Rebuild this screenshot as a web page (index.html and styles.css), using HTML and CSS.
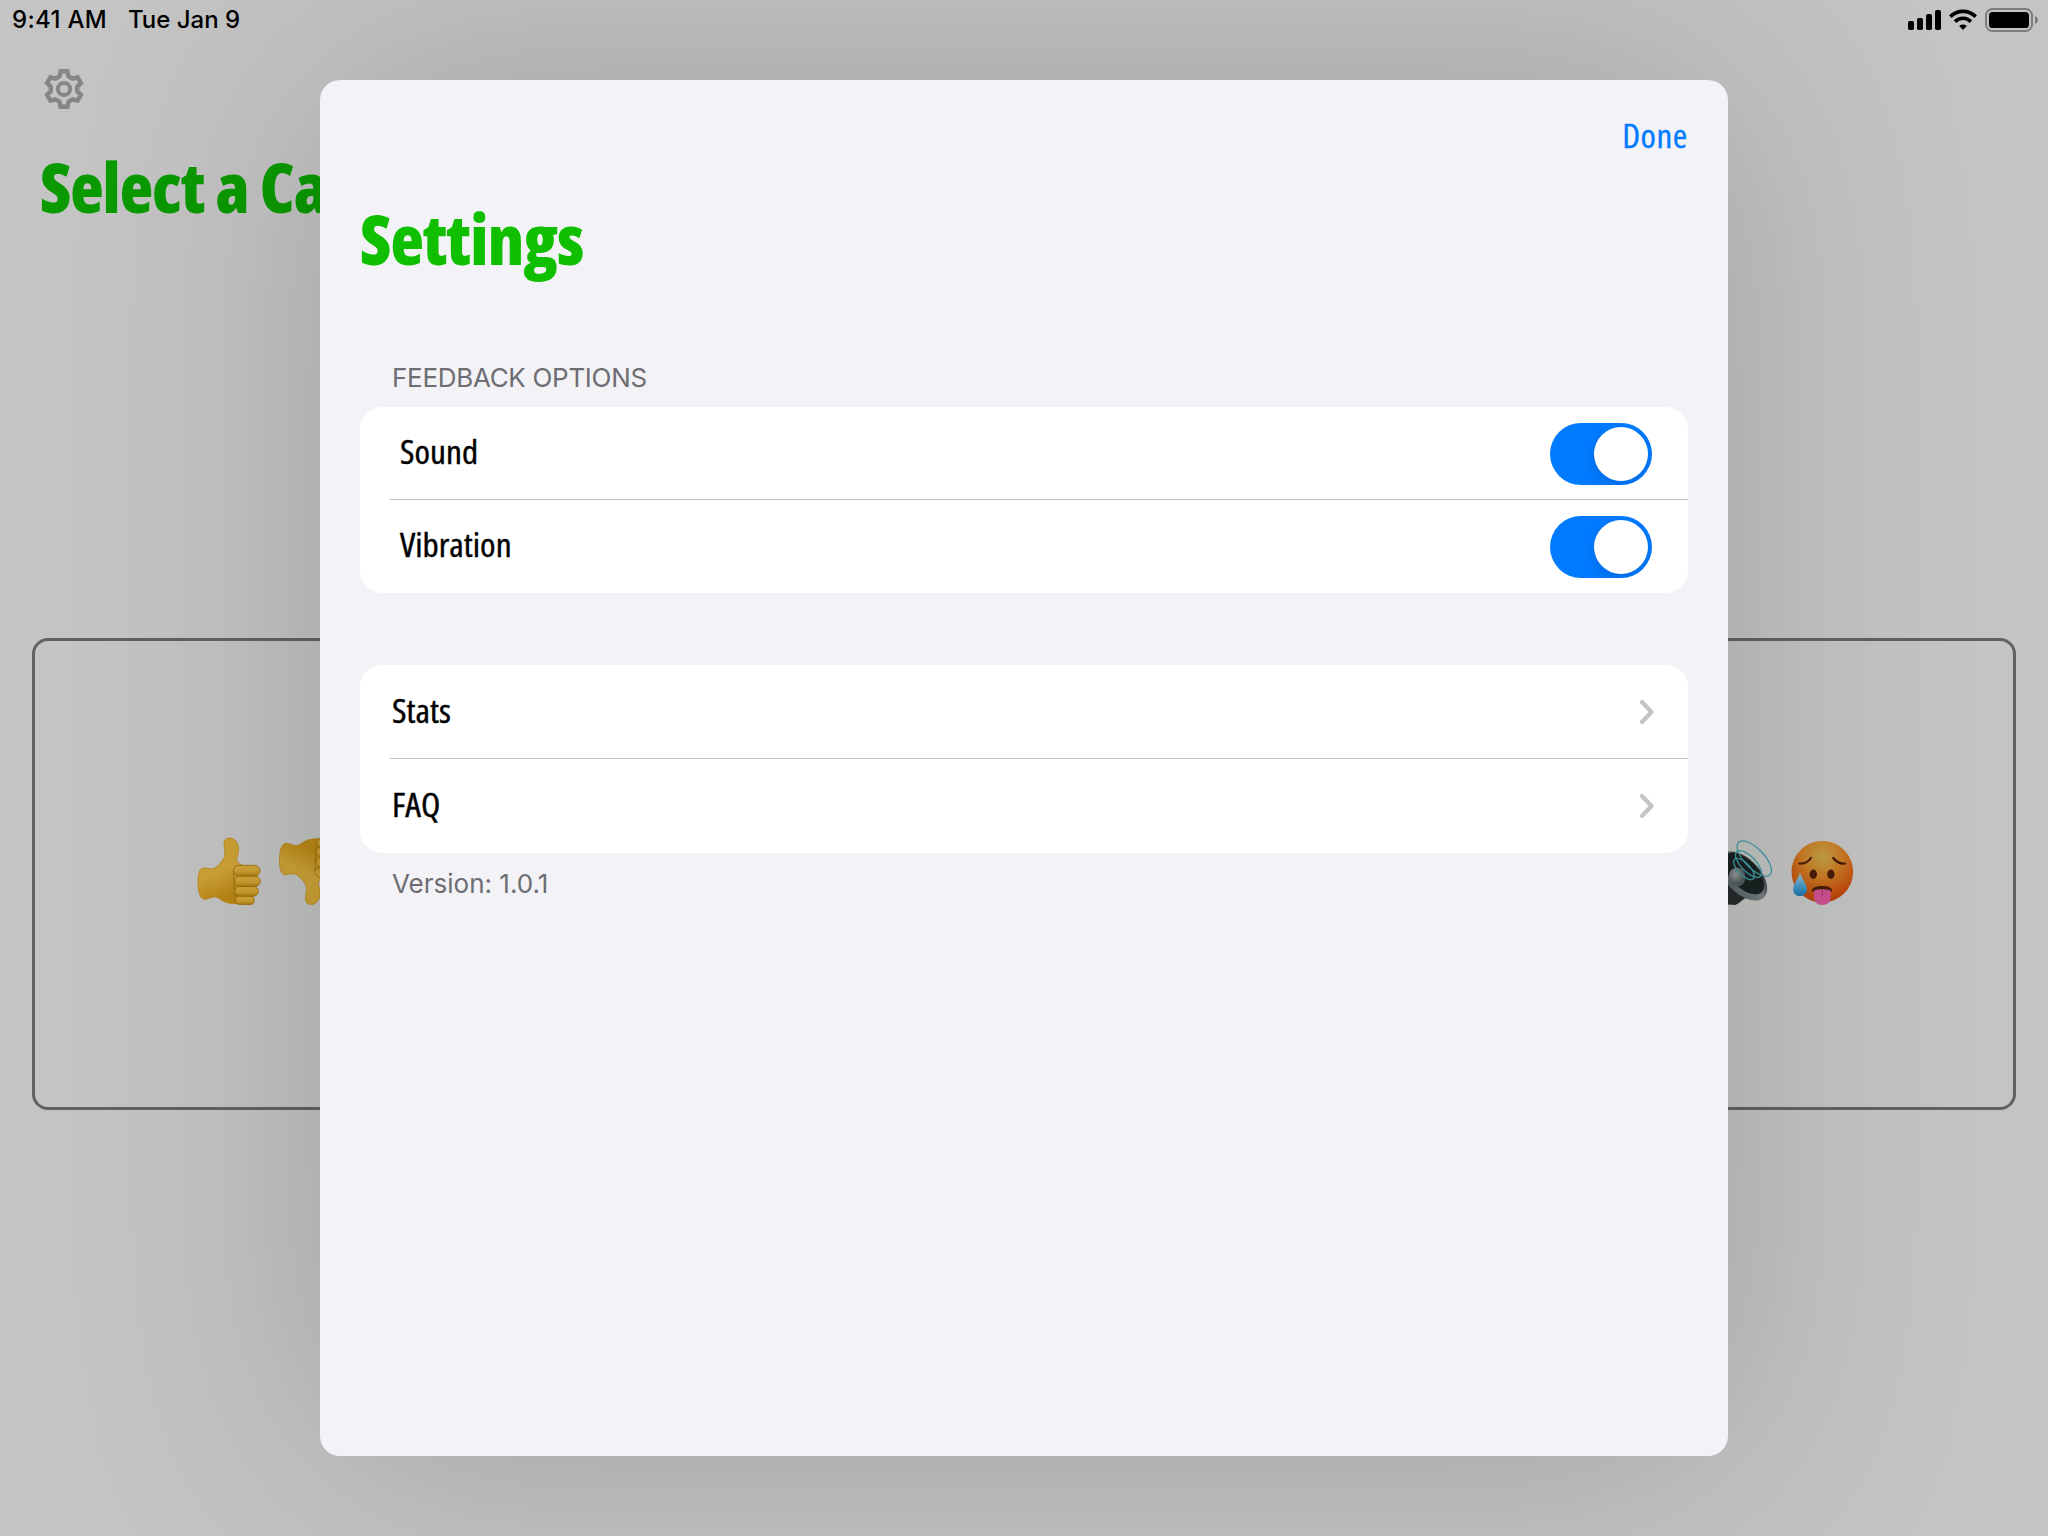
FILE: index.html
```html
<!DOCTYPE html>
<html lang="en">
<head>
<meta charset="utf-8">
<title>Settings</title>
<link rel="stylesheet" href="styles.css">
</head>
<body>
<div class="screen">
  <header class="status">
    <span class="time">9:41 AM</span>
    <span>Tue Jan 9</span>
    <svg class="status-icons" width="132" height="40" viewBox="0 0 132 40">
      <rect x="0" y="21" width="6" height="9" rx="1.8"/>
      <rect x="9" y="18" width="6" height="12" rx="1.8"/>
      <rect x="18" y="14" width="6" height="16" rx="1.8"/>
      <rect x="27" y="10" width="6" height="20" rx="1.8"/>
      <g fill="none" stroke="#000" stroke-width="3.6">
        <path d="M42.3 16.6a18 18 0 0 1 25.4 0"/>
        <path d="M47 21.6a11.4 11.4 0 0 1 16 0"/>
      </g>
      <path d="M51.2 26a5.6 5.6 0 0 1 7.6 0L55 30z"/>
      <rect x="78" y="9" width="46" height="22" rx="6.5" fill="none" stroke="#7b7c7b" stroke-width="2"/>
      <rect x="81" y="12" width="40" height="16" rx="3.6"/>
      <path d="M127 16c4 1.5 4 6.500 0 8z" fill="#7b7c7b"/>
    </svg>
  </header>
  <nav class="nav">
    <svg width="42" height="42" viewBox="-21 -21 42 42" fill="none" stroke="#868686">
      <path stroke-width="4.400" stroke-linejoin="miter" d="M-4.600-12.600L-3.400-17.800H3.400L4.600-12.600L8.600-10.300L13.500-11.700L16.900-5.900L13.200-2.300V2.300L16.900 5.900L13.500 11.700L8.600 10.300L4.600 12.600L3.400 17.800H-3.400L-4.600 12.600L-8.600 10.300L-13.500 11.700L-16.900 5.900L-13.200 2.300V-2.300L-16.900-5.900L-13.500-11.700L-8.600-10.300Z"/>
      <circle r="6.100" stroke-width="4"/>
    </svg>
  </nav>
  <h1 class="title back-title">Select a Category</h1>
  <main class="cards">
    <div class="card">
      <svg width="66" height="70" viewBox="0 0 66 70">
        <defs>
          <linearGradient id="skin" x1="0" y1="0" x2="0.300" y2="1">
            <stop offset="0" stop-color="#cda232"/><stop offset="0.600" stop-color="#cfa338"/><stop offset="1" stop-color="#bb8614"/>
          </linearGradient>
          <linearGradient id="finger" x1="0" y1="0" x2="0" y2="1">
            <stop offset="0" stop-color="#d3a93c"/><stop offset="0.600" stop-color="#cd9e30"/><stop offset="1" stop-color="#b17b0e"/>
          </linearGradient>
          <g id="thumb">
            <path fill="url(#skin)" stroke="#b98716" stroke-width="0.800" d="M28 7C28.500 3 31 2 34 2C39 2.500 42.500 7 42.600 13C42.800 18 40 22 41 25C42 28 45 28 47 30L46 66C42 68.500 35 68 29 66C25 64.500 22 61 18.500 60.800C15 61 12 63.500 8.500 63.300C3 63 2 53 2 46C2 40 3 33 6.500 32C10 31.500 14 33.500 18 32.500C22 30 26 26 28.500 21C30 17 27.800 12 28 7Z"/>
            <path fill="none" stroke="#96690a" stroke-width="1.200" opacity="0.600" d="M37.500 35C37 45 39 55 39.500 65"/>
            <g fill="url(#finger)" stroke="#9a6b0c" stroke-width="0.800">
              <rect x="39.300" y="60" width="19" height="8.600" rx="4.300"/>
              <rect x="38.700" y="50.300" width="23.600" height="10" rx="5"/>
              <rect x="38.700" y="40" width="25.600" height="10.400" rx="5.200"/>
              <rect x="37.500" y="29.300" width="26.500" height="10.800" rx="5.400"/>
            </g>
          </g>
        </defs>
        <use href="#thumb"/>
      </svg>
      <svg width="66" height="70" viewBox="0 0 66 70"><use href="#thumb" transform="translate(0.500 70.500) scale(1 -1)"/></svg>
    </div>
    <div class="card card-end">
      <svg width="66" height="70" viewBox="0 0 66 70">
        <defs>
          <linearGradient id="rim" x1="0" y1="0" x2="0" y2="1">
            <stop offset="0" stop-color="#2c3032"/><stop offset="0.500" stop-color="#7b8287"/><stop offset="1" stop-color="#5c6368"/>
          </linearGradient>
          <radialGradient id="ball" cx="0.400" cy="0.350"><stop offset="0" stop-color="#969b9d"/><stop offset="1" stop-color="#555b5e"/></radialGradient>
        </defs>
        <path fill="#262a2c" d="M4 30L24 20L40 62C34 61 32 67 26 69L12 68Z"/>
        <ellipse cx="34" cy="40" rx="30" ry="17" transform="rotate(46 34 40)" fill="url(#rim)"/>
        <ellipse cx="34.500" cy="37.500" rx="26" ry="13.500" transform="rotate(46 34.500 37.500)" fill="#1b2022"/>
        <ellipse cx="28" cy="41" rx="8.500" ry="9.500" fill="url(#ball)"/>
        <g fill="none" stroke="#3f9aa5" stroke-width="1.300">
          <ellipse cx="45.300" cy="22.500" rx="22.500" ry="9.800" transform="rotate(46 45.300 22.500)"/>
          <ellipse cx="39.500" cy="28" rx="17" ry="7.500" transform="rotate(46 39.500 28)"/>
          <ellipse cx="35" cy="33" rx="13.500" ry="6" transform="rotate(46 35 33)"/>
        </g>
      </svg>
      <svg width="66" height="70" viewBox="0 0 66 70">
        <defs>
          <radialGradient id="face" cx="0.500" cy="0.250" r="0.800">
            <stop offset="0" stop-color="#c4a048"/><stop offset="0.400" stop-color="#ca7c26"/><stop offset="0.800" stop-color="#c04c0e"/><stop offset="1" stop-color="#ad3a08"/>
          </radialGradient>
          <linearGradient id="drop" x1="0" y1="0" x2="0" y2="1"><stop offset="0" stop-color="#a9bfc9"/><stop offset="0.550" stop-color="#4a9ccb"/><stop offset="1" stop-color="#1676ab"/></linearGradient>
        </defs>
        <circle cx="33.300" cy="35.700" r="30.800" fill="url(#face)"/>
        <g fill="#4a1d0a">
          <ellipse cx="24.300" cy="38.300" rx="3.700" ry="4.700"/>
          <ellipse cx="41.900" cy="38.300" rx="3.700" ry="4.700"/>
          <path d="M22.800 56C22.500 52 26 50 33 50S43.500 52 43.200 56Q33 52.500 22.800 56Z"/>
        </g>
        <g fill="none" stroke="#4a1d0a" stroke-width="2.200" stroke-linecap="round">
          <path d="M10.300 27.500Q18 28 22 22"/>
          <path d="M44.300 22Q48.500 28 56 27.500"/>
        </g>
        <path fill="#cc5091" d="M25 54.500Q33 52 41.700 54.500V61C41.700 66 38 69 33.300 69S25 66 25 61Z"/>
        <path fill="none" stroke="#9c2f68" stroke-width="0.900" d="M33.300 54V60"/>
        <path fill="url(#drop)" d="M11 36.500C12.500 42 18 48 18 53.500C18 57.500 15 60 11 60S4.200 57.500 4.200 53.500C4.200 48 9.500 42 11 36.500Z"/>
      </svg>
    </div>
  </main>
</div>

<section class="sheet">
  <div class="toolbar"><a class="done">Done</a></div>
  <h1 class="title">Settings</h1>
  <h2 class="caption heading">FEEDBACK OPTIONS</h2>
  <div class="group">
    <div class="row inset"><span>Sound</span><i class="toggle"></i></div>
    <div class="row inset"><span>Vibration</span><i class="toggle"></i></div>
  </div>
  <div class="group links">
    <div class="row"><span>Stats</span>
      <svg class="chevron" width="16" height="26" viewBox="0 0 16 26"><path d="M3 3L12.500 13L3 23"/></svg></div>
    <div class="row"><span>FAQ</span>
      <svg class="chevron" width="16" height="26" viewBox="0 0 16 26"><path d="M3 3L12.500 13L3 23"/></svg></div>
  </div>
  <p class="caption version">Version: 1.0.1</p>
</section>
</body>
</html>
```
FILE: styles.css
```css
* { box-sizing: border-box; }

body {
  margin: 0;
  position: relative;
  width: 2048px;
  height: 1536px;
  overflow: hidden;
  background: #c4c4c4;
  font-family: "Open Sans", sans-serif;
  font-stretch: 75%;
}

svg { display: block; flex: none; }

/* Dimmed screen behind the sheet */
.status {
  display: flex;
  gap: 21px;
  height: 40px;
  padding: 0 8px 0 12px;
  font: 500 24px/40px Inter, sans-serif;
  color: #000;
}
.time { letter-spacing: 0.3px; }
.status-icons { margin-left: auto; }

.nav { padding: 28px 0 0 43px; height: 106px; }

.title {
  margin: 0;
  font-size: 69px;
  line-height: 80px;
  font-weight: 800;
  letter-spacing: -0.8px;
  color: #10c000;
  white-space: nowrap;
}
.back-title {
  width: 320px;
  overflow: hidden;
  padding-left: 40px;
  letter-spacing: -1px;
  color: #0a9a00;
}

.cards {
  display: flex;
  gap: 32px;
  margin-top: 412px;
  padding: 0 32px;
}
.card {
  flex: 1;
  height: 472px;
  border: 3px solid #626262;
  border-radius: 16px;
  padding: 195px 161px 0;
  display: flex;
  gap: 15px;
}
.card-end { justify-content: flex-end; gap: 14px; padding-right: 158px; }

/* Modal sheet */
.sheet {
  position: absolute;
  left: 320px;
  top: 80px;
  width: 1408px;
  height: 1376px;
  padding: 0 40px;
  border-radius: 20px;
  background: #f2f2f7;
  box-shadow: 0 0 260px rgba(10, 26, 0, 0.2);
}

.toolbar {
  display: flex;
  justify-content: flex-end;
  height: 118px;
  padding-top: 35px;
}
.done {
  font-size: 33px;
  line-height: 42px;
  letter-spacing: 0.4px;
  transform: scaleX(1.06);
  transform-origin: right;
  -webkit-text-stroke: 0.3px currentColor;
  color: #007aff;
}

.caption {
  margin: 0;
  padding-left: 32px;
  font: 400 26px/32px Inter, sans-serif;
  color: #6d6d72;
}
.heading { margin: 84px 0 13px; letter-spacing: -0.3px; }
.version { margin-top: 15px; }

.group { border-radius: 22px; background: #fff; }
.links { margin-top: 72px; }

.row {
  position: relative;
  display: flex;
  align-items: center;
  justify-content: space-between;
  height: 93px;
  padding: 0 33px 0 32px;
  font-size: 33px;
  color: #000;
}
.row span {
  padding-bottom: 4px;
  transform: scaleX(1.07);
  transform-origin: left;
  -webkit-text-stroke: 0.4px currentColor;
}
.inset { padding: 0 36px 0 40px; }
.links .row { height: 94px; }
.row + .row::before {
  content: "";
  position: absolute;
  left: 30px;
  right: 0;
  top: -1px;
  height: 1px;
  background: #c2c2c4;
}

.toggle {
  width: 102px;
  height: 62px;
  padding: 4px;
  border-radius: 31px;
  background: #007aff;
  overflow: hidden;
}
.toggle::before {
  content: "";
  display: block;
  width: 54px;
  height: 54px;
  margin-left: auto;
  border-radius: 50%;
  background: #fff;
  box-shadow: 0 5px 14px rgba(0, 0, 0, 0.12);
}

.chevron { fill: none; stroke: #c4c4c6; stroke-width: 4.2px; stroke-linecap: round; stroke-linejoin: round; }
```
